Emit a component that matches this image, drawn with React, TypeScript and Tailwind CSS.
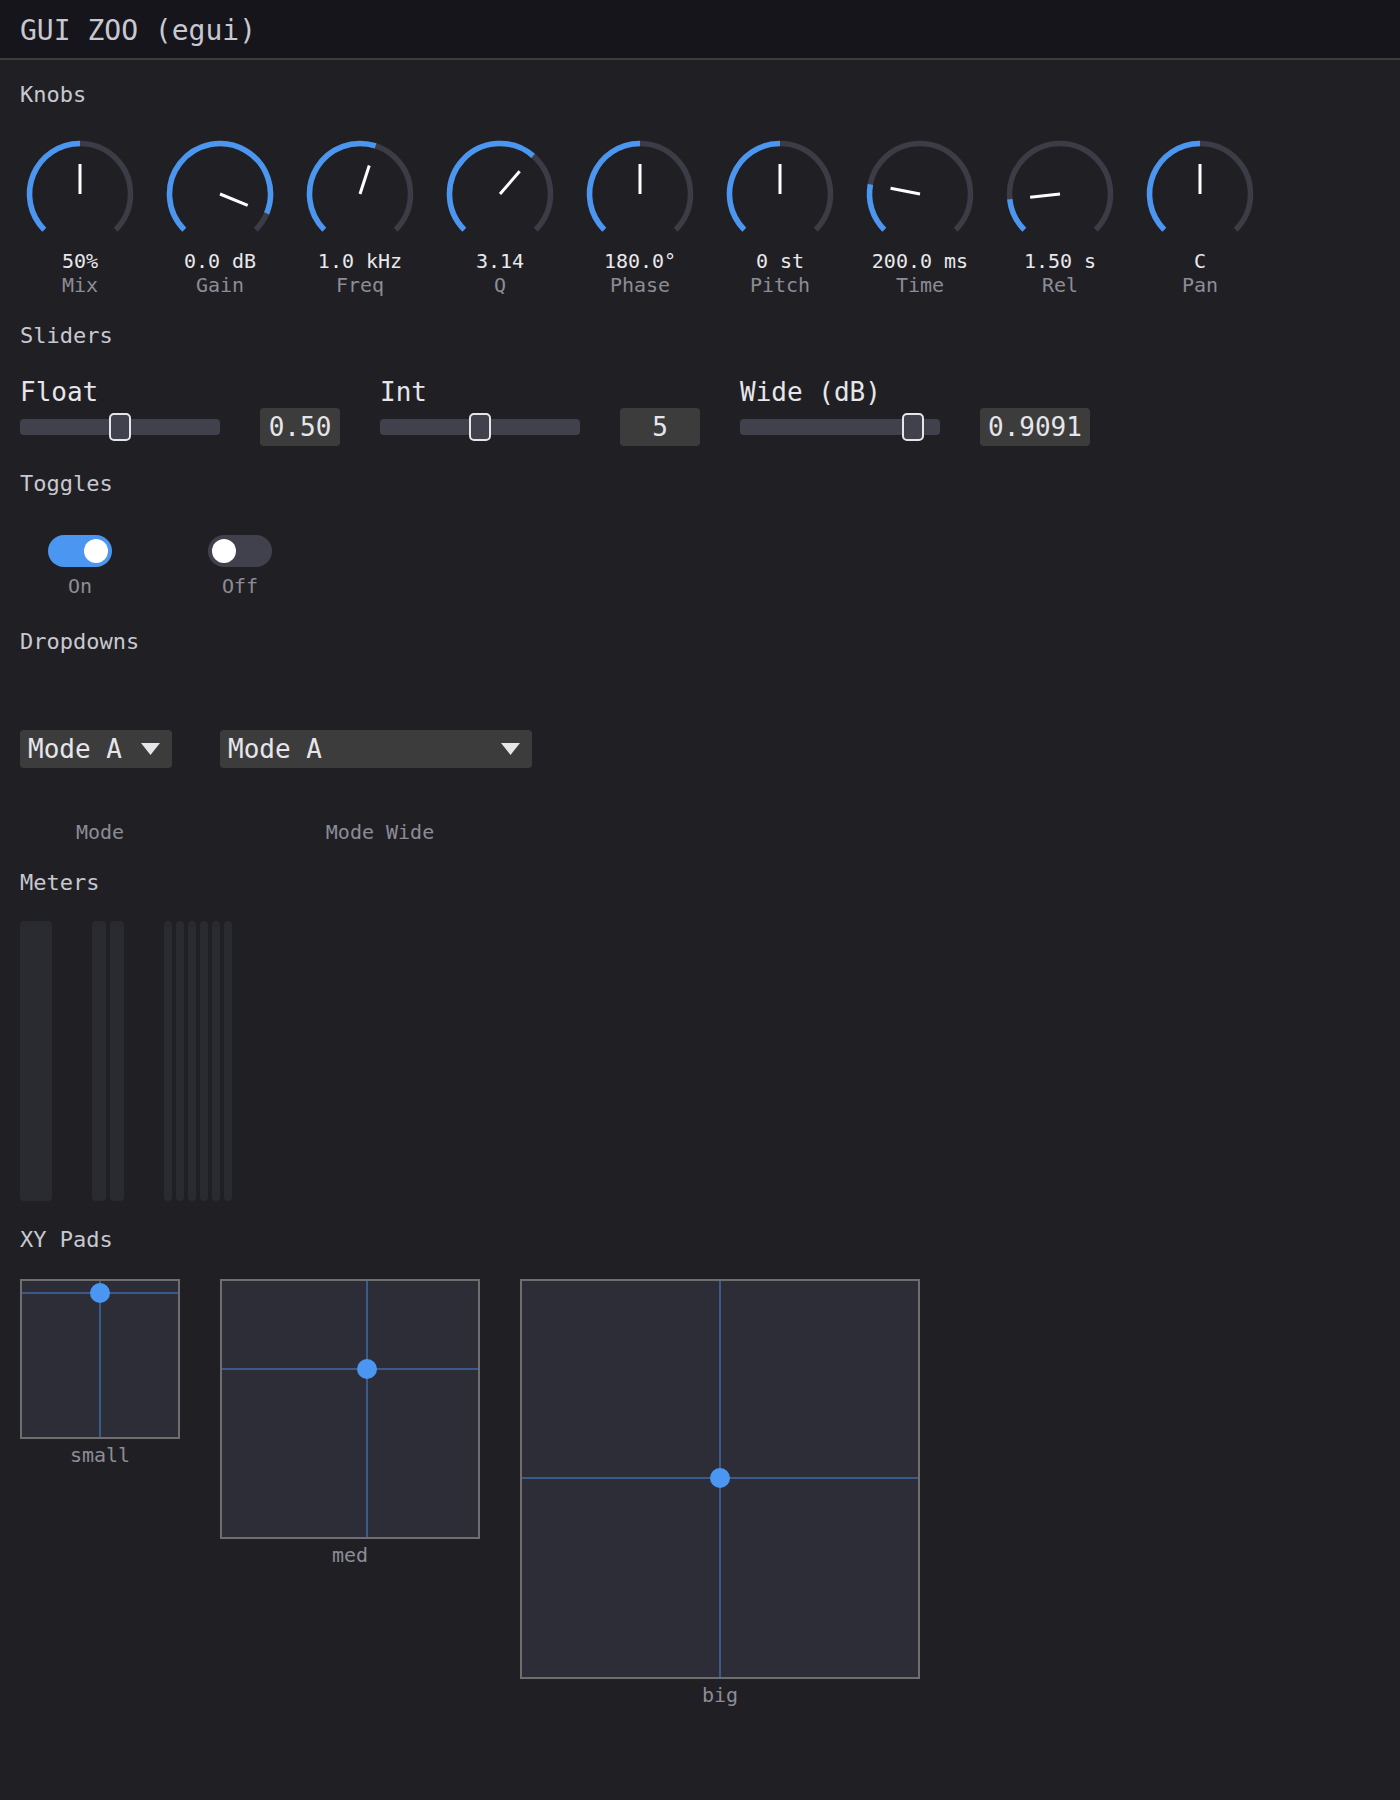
import React from "react";

const FILL = "#4a96f0";
const TRACK = "#3c3c46";

function pt(cx: number, cy: number, r: number, deg: number) {
  const a = (deg * Math.PI) / 180;
  return [cx + r * Math.sin(a), cy - r * Math.cos(a)];
}

function arcPath(cx: number, cy: number, r: number, a0: number, a1: number) {
  const [x0, y0] = pt(cx, cy, r, a0);
  const [x1, y1] = pt(cx, cy, r, a1);
  const large = a1 - a0 > 180 ? 1 : 0;
  return `M ${x0} ${y0} A ${r} ${r} 0 ${large} 1 ${x1} ${y1}`;
}

function Knob({ angle, value, label }: { angle: number; value: string; label: string }) {
  const cx = 60;
  const cy = 55;
  const r = 50.5;
  const [px, py] = pt(cx, cy, 30, angle);
  return (
    <div className="flex w-[120px] flex-col items-center">
      <svg width="120" height="100" viewBox="0 0 120 100">
        <path d={arcPath(cx, cy, r, -135, 135)} stroke={TRACK} strokeWidth="5.5" fill="none" />
        <path d={arcPath(cx, cy, r, -135, angle)} stroke={FILL} strokeWidth="5.5" fill="none" />
        <line x1={cx} y1={cy} x2={px} y2={py} stroke="#ffffff" strokeWidth="3" />
      </svg>
      <div className="mt-[10px] text-[20px] leading-[24px] text-[#e8e8ec]">{value}</div>
      <div className="text-[20px] leading-[24px] text-[#8c8c96]">{label}</div>
    </div>
  );
}

function SectionTitle({ children, className }: { children: React.ReactNode; className: string }) {
  return <div className={"text-[22px] leading-[28px] text-[#c8c8d0] " + className}>{children}</div>;
}

function Slider({ label, frac, value }: { label: string; frac: number; value: string }) {
  const left = frac * 178;
  return (
    <div className="flex flex-col">
      <div className="text-[26px] leading-[32px] text-[#e6e6ea]">{label}</div>
      <div className="flex h-[38px] items-center gap-[40px]">
        <div className="relative h-[16px] w-[200px] rounded-[4px] bg-[#41414d]">
          <div
            className="absolute top-[-6px] h-[28px] w-[22px] rounded-[5px] border-2 border-[#e6e6ea] bg-[#41414d]"
            style={{ left: `${left}px` }}
          />
        </div>
        <div className="flex h-[38px] min-w-[80px] items-center justify-center rounded-[4px] bg-[#3c3c3c] px-[8px] text-[26px] text-[#e6e6ea]">
          {value}
        </div>
      </div>
    </div>
  );
}

function Toggle({ on, label }: { on: boolean; label: string }) {
  return (
    <div className="flex w-[120px] flex-col items-center">
      <div
        className={
          "flex h-[32px] w-[64px] items-center rounded-full px-[4px] " +
          (on ? "justify-end bg-[#4a96f0]" : "justify-start bg-[#41414d]")
        }
      >
        <div className="h-[24px] w-[24px] rounded-full bg-white" />
      </div>
      <div className="mt-[7px] text-[20px] leading-[24px] text-[#8c8c96]">{label}</div>
    </div>
  );
}

function Dropdown({ cellW, boxW, label }: { cellW: string; boxW: string; label: string }) {
  return (
    <div className={"flex flex-col " + cellW}>
      <div
        className={
          "flex h-[38px] items-center justify-between rounded-[4px] bg-[#3c3c3c] pl-[8px] pr-[12px] text-[26px] text-[#e6e6ea] " +
          boxW
        }
      >
        <span>Mode A</span>
        <svg width="19" height="12" viewBox="0 0 19 12">
          <polygon points="0,0 19,0 9.5,12" fill="#e6e6ea" />
        </svg>
      </div>
      <div className="mt-[52px] text-center text-[20px] leading-[24px] text-[#8c8c96]">{label}</div>
    </div>
  );
}

function Pad({ dx, dy, label, sizeClass }: { dx: number; dy: number; label: string; sizeClass: string }) {
  return (
    <div className="flex flex-col items-center">
      <div className={"relative overflow-hidden border-2 border-[#6e6e6e] bg-[#2d2d37] " + sizeClass}>
        <div className="absolute top-0 bottom-0 w-[2px] bg-[#3a5a8c]" style={{ left: `${dx - 3}px` }} />
        <div className="absolute left-0 right-0 h-[2px] bg-[#3a5a8c]" style={{ top: `${dy - 3}px` }} />
        <div
          className="absolute h-[20px] w-[20px] rounded-full bg-[#4a96f0]"
          style={{ left: `${dx - 12}px`, top: `${dy - 12}px` }}
        />
      </div>
      <div className="mt-[4px] text-[20px] leading-[24px] text-[#8c8c96]">{label}</div>
    </div>
  );
}

export default function App() {
  const knobs = [
    { angle: 0, value: "50%", label: "Mix" },
    { angle: 112.5, value: "0.0 dB", label: "Gain" },
    { angle: 18, value: "1.0 kHz", label: "Freq" },
    { angle: 41, value: "3.14", label: "Q" },
    { angle: 0, value: "180.0°", label: "Phase" },
    { angle: 0, value: "0 st", label: "Pitch" },
    { angle: -79, value: "200.0 ms", label: "Time" },
    { angle: -96, value: "1.50 s", label: "Rel" },
    { angle: 0, value: "C", label: "Pan" },
  ];
  return (
    <div className="min-h-[1800px] w-full bg-[#202024] font-['DejaVu_Sans_Mono',monospace]">
      <div className="flex h-[60px] items-center border-b-2 border-[#3c3c3c] bg-[#15151b] px-[20px] pt-[4px] text-[28px] text-[#c8c8d0]">
        GUI ZOO (egui)
      </div>
      <div className="px-[20px]">
        <SectionTitle className="mt-[21px]">Knobs</SectionTitle>
        <div className="mt-[30px] flex gap-[20px]">
          {knobs.map((k) => (
            <Knob key={k.label} {...k} />
          ))}
        </div>

        <SectionTitle className="mt-[25px]">Sliders</SectionTitle>
        <div className="mt-[26px] flex gap-[40px]">
          <Slider label="Float" frac={0.5} value="0.50" />
          <Slider label="Int" frac={0.5} value="5" />
          <Slider label="Wide (dB)" frac={0.9091} value="0.9091" />
        </div>

        <SectionTitle className="mt-[24px]">Toggles</SectionTitle>
        <div className="mt-[37px] flex gap-[40px]">
          <Toggle on={true} label="On" />
          <Toggle on={false} label="Off" />
        </div>

        <SectionTitle className="mt-[30px]">Dropdowns</SectionTitle>
        <div className="mt-[74px] flex gap-[40px]">
          <Dropdown cellW="w-[160px]" boxW="w-[152px]" label="Mode" />
          <Dropdown cellW="w-[320px]" boxW="w-[312px]" label="Mode Wide" />
        </div>

        <SectionTitle className="mt-[25px]">Meters</SectionTitle>
        <div className="mt-[24px] flex h-[280px] gap-[40px]">
          <div className="w-[32px] rounded-[4px] bg-[#2a2a31]" />
          <div className="flex gap-[4px]">
            <div className="w-[14px] rounded-[4px] bg-[#2a2a31]" />
            <div className="w-[14px] rounded-[4px] bg-[#2a2a31]" />
          </div>
          <div className="flex gap-[4px]">
            {[0, 1, 2, 3, 4, 5].map((i) => (
              <div key={i} className="w-[8px] rounded-[4px] bg-[#2a2a31]" />
            ))}
          </div>
        </div>

        <SectionTitle className="mt-[25px]">XY Pads</SectionTitle>
        <div className="mt-[25px] flex items-start gap-[40px]">
          <Pad sizeClass="h-[160px] w-[160px]" dx={80} dy={14} label="small" />
          <Pad sizeClass="h-[260px] w-[260px]" dx={147} dy={90} label="med" />
          <Pad sizeClass="h-[400px] w-[400px]" dx={200} dy={199} label="big" />
        </div>
      </div>
    </div>
  );
}
